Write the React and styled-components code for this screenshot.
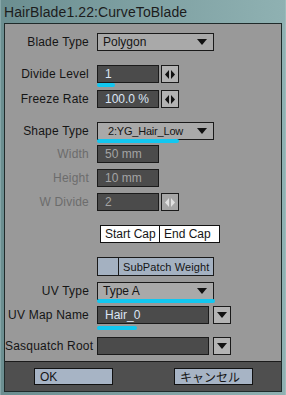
import styled, { createGlobalStyle } from 'styled-components';

const GlobalStyle = createGlobalStyle`
  html, body {
    margin: 0;
    padding: 0;
    background: #6f9193;
  }
  body {
    font-family: "Liberation Sans", Arial, "Noto Sans CJK JP", sans-serif;
  }
`;

const Window = styled.div`
  width: 286px;
  height: 395px;
  box-sizing: border-box;
  display: flex;
  flex-direction: column;
  padding: 0 3px 3px 3px;
  background: linear-gradient(90deg, #6b8e90 0%, #7d9fa1 45%, #8fb1b2 100%);
  border-left: 1px solid #86a6a8;
  border-right: 1px solid #9cbcbc;
`;

const TitleBar = styled.div`
  height: 23px;
  display: flex;
  align-items: center;
  font-size: 14px;
  color: #1c1c1c;
  letter-spacing: 0.1px;
`;

const Panel = styled.div`
  flex: 1;
  display: flex;
  flex-direction: column;
  border: 1px solid #1f2a2a;
  background: #999999;
`;

const Body = styled.div`
  flex: 1;
  padding-top: 9px;
`;

const Row = styled.div`
  display: grid;
  grid-template-columns: 84px auto;
  column-gap: 8px;
  align-items: center;
  height: ${(p) => p.$h || 18}px;
  margin-top: ${(p) => p.$mt || 0}px;
`;

const Label = styled.div`
  text-align: right;
  font-size: 12px;
  color: ${(p) => (p.$disabled ? '#6c6c6c' : '#151515')};
  white-space: nowrap;
  letter-spacing: 0.2px;
`;

const Control = styled.div`
  position: relative;
  display: flex;
  align-items: center;
  height: 100%;
  gap: ${(p) => p.$gap || 0}px;
  margin-left: ${(p) => p.$ml || 0}px;
`;

const Dropdown = styled.div`
  box-sizing: border-box;
  width: 117px;
  height: 100%;
  background: #a9a9a9;
  border: 1px solid #1a1a1a;
  display: flex;
  align-items: center;
  justify-content: space-between;
  padding: 0 6px 0 ${(p) => p.$pl || 5}px;
  font-size: 12px;
  color: #151515;
  white-space: nowrap;
`;

const DropText = styled.span`
  font-size: ${(p) => p.$fs || 12}px;
  letter-spacing: ${(p) => p.$ls || 0}px;
`;

const Field = styled.div`
  box-sizing: border-box;
  width: ${(p) => p.$w}px;
  height: 100%;
  background: #4b4b4b;
  border: 1px solid #1a1a1a;
  display: flex;
  align-items: center;
  padding-left: 7px;
  font-size: 12px;
  color: ${(p) => (p.$disabled ? '#a4a4a4' : '#dce6f5')};
  white-space: nowrap;
`;

const SmallButton = styled.div`
  box-sizing: border-box;
  width: 18px;
  height: 100%;
  background: ${(p) => (p.$disabled ? '#a6a6a6' : '#b3b3b3')};
  border: 1px solid #1a1a1a;
  display: flex;
  align-items: center;
  justify-content: center;
`;

const Underline = styled.div`
  position: absolute;
  left: 0;
  top: calc(100% ${(p) => (p.$off >= 0 ? '+' : '-')} ${(p) => Math.abs(p.$off)}px);
  width: ${(p) => p.$w}px;
  height: 4px;
  border-radius: 2px;
  background: #12c7f0;
`;

const CapGroup = styled.div`
  display: flex;
  height: 100%;
`;

const CapButton = styled.div`
  box-sizing: border-box;
  width: ${(p) => p.$w}px;
  height: 100%;
  background: #ffffff;
  border: 1px solid #111;
  margin-left: ${(p) => (p.$joined ? -1 : 0)}px;
  display: flex;
  align-items: center;
  padding-left: 4px;
  font-size: 12px;
  color: #151515;
  white-space: nowrap;
`;

const Toggle = styled.div`
  box-sizing: border-box;
  width: 117px;
  height: 100%;
  display: flex;
  border: 1px solid #1a1a1a;
  background: #a4b1c1;
`;

const ToggleBox = styled.div`
  width: 20px;
  flex: none;
  border-right: 1px solid #1a1a1a;
`;

const ToggleText = styled.div`
  display: flex;
  align-items: center;
  padding-left: 4px;
  font-size: 11px;
  letter-spacing: 0.1px;
  color: #151515;
  white-space: nowrap;
`;

const Footer = styled.div`
  height: 30px;
  box-sizing: border-box;
  border-top: 1px solid #1a1a1a;
  background: #4f4f4f;
  display: flex;
  align-items: flex-start;
  padding: 6px 0 0 29px;
  gap: 61px;
`;

const FooterButton = styled.div`
  box-sizing: border-box;
  width: 79px;
  height: 17px;
  background: #a7b4c5;
  border: 1px solid #111;
  display: flex;
  align-items: center;
  padding-left: 5px;
  font-size: 12px;
  color: #151515;
  white-space: nowrap;
`;

const DownArrow = () => (
  <svg width="10" height="6" viewBox="0 0 10 6">
    <polygon points="0,0 10,0 5,6" fill="#111" />
  </svg>
);

const SpinIcon = ({ disabled }) => (
  <svg width="10" height="9" viewBox="0 0 10 9">
    <polygon points="4,0 4,9 0,4.5" fill={disabled ? '#e0e0e0' : '#111'} />
    <polygon points="6,0 6,9 10,4.5" fill={disabled ? '#e0e0e0' : '#111'} />
  </svg>
);

const App = () => {
  return (
    <>
      <GlobalStyle />
      <Window>
        <TitleBar>HairBlade1.22:CurveToBlade</TitleBar>
        <Panel>
          <Body>
            <Row>
              <Label>Blade Type</Label>
              <Control>
                <Dropdown>
                  <DropText>Polygon</DropText>
                  <DownArrow />
                </Dropdown>
              </Control>
            </Row>
            <Row $mt={14}>
              <Label>Divide Level</Label>
              <Control $gap={2}>
                <Field $w={62}>1</Field>
                <SmallButton>
                  <SpinIcon />
                </SmallButton>
                <Underline $w={18} $off={0} />
              </Control>
            </Row>
            <Row $mt={7}>
              <Label>Freeze Rate</Label>
              <Control $gap={2}>
                <Field $w={62}>100.0 %</Field>
                <SmallButton>
                  <SpinIcon />
                </SmallButton>
              </Control>
            </Row>
            <Row $mt={14}>
              <Label>Shape Type</Label>
              <Control>
                <Dropdown $pl={10}>
                  <DropText $fs={11} $ls={-0.2}>2:YG_Hair_Low</DropText>
                  <DownArrow />
                </Dropdown>
                <Underline $w={82} $off={-1} />
              </Control>
            </Row>
            <Row $mt={5}>
              <Label $disabled>Width</Label>
              <Control>
                <Field $w={62} $disabled>50 mm</Field>
              </Control>
            </Row>
            <Row $mt={6}>
              <Label $disabled>Height</Label>
              <Control>
                <Field $w={62} $disabled>10 mm</Field>
              </Control>
            </Row>
            <Row $mt={6}>
              <Label $disabled>W Divide</Label>
              <Control $gap={2}>
                <Field $w={62} $disabled>2</Field>
                <SmallButton $disabled>
                  <SpinIcon disabled />
                </SmallButton>
              </Control>
            </Row>
            <Row $mt={14}>
              <span />
              <Control $ml={3}>
                <CapGroup>
                  <CapButton $w={60}>Start Cap</CapButton>
                  <CapButton $w={61} $joined>End Cap</CapButton>
                </CapGroup>
              </Control>
            </Row>
            <Row $mt={14} $h={19}>
              <span />
              <Control>
                <Toggle>
                  <ToggleBox />
                  <ToggleText>SubPatch Weight</ToggleText>
                </Toggle>
              </Control>
            </Row>
            <Row $mt={6}>
              <Label>UV Type</Label>
              <Control>
                <Dropdown>
                  <DropText>Type A</DropText>
                  <DownArrow />
                </Dropdown>
                <Underline $w={118} $off={-1} />
              </Control>
            </Row>
            <Row $mt={6}>
              <Label>UV Map Name</Label>
              <Control $gap={4}>
                <Field $w={112}>Hair_0</Field>
                <SmallButton>
                  <DownArrow />
                </SmallButton>
                <Underline $w={40} $off={2} />
              </Control>
            </Row>
            <Row $mt={13}>
              <Label>Sasquatch Root</Label>
              <Control $gap={4}>
                <Field $w={112} />
                <SmallButton>
                  <DownArrow />
                </SmallButton>
              </Control>
            </Row>
          </Body>
          <Footer>
            <FooterButton>OK</FooterButton>
            <FooterButton>キャンセル</FooterButton>
          </Footer>
        </Panel>
      </Window>
    </>
  );
};

export default App;
